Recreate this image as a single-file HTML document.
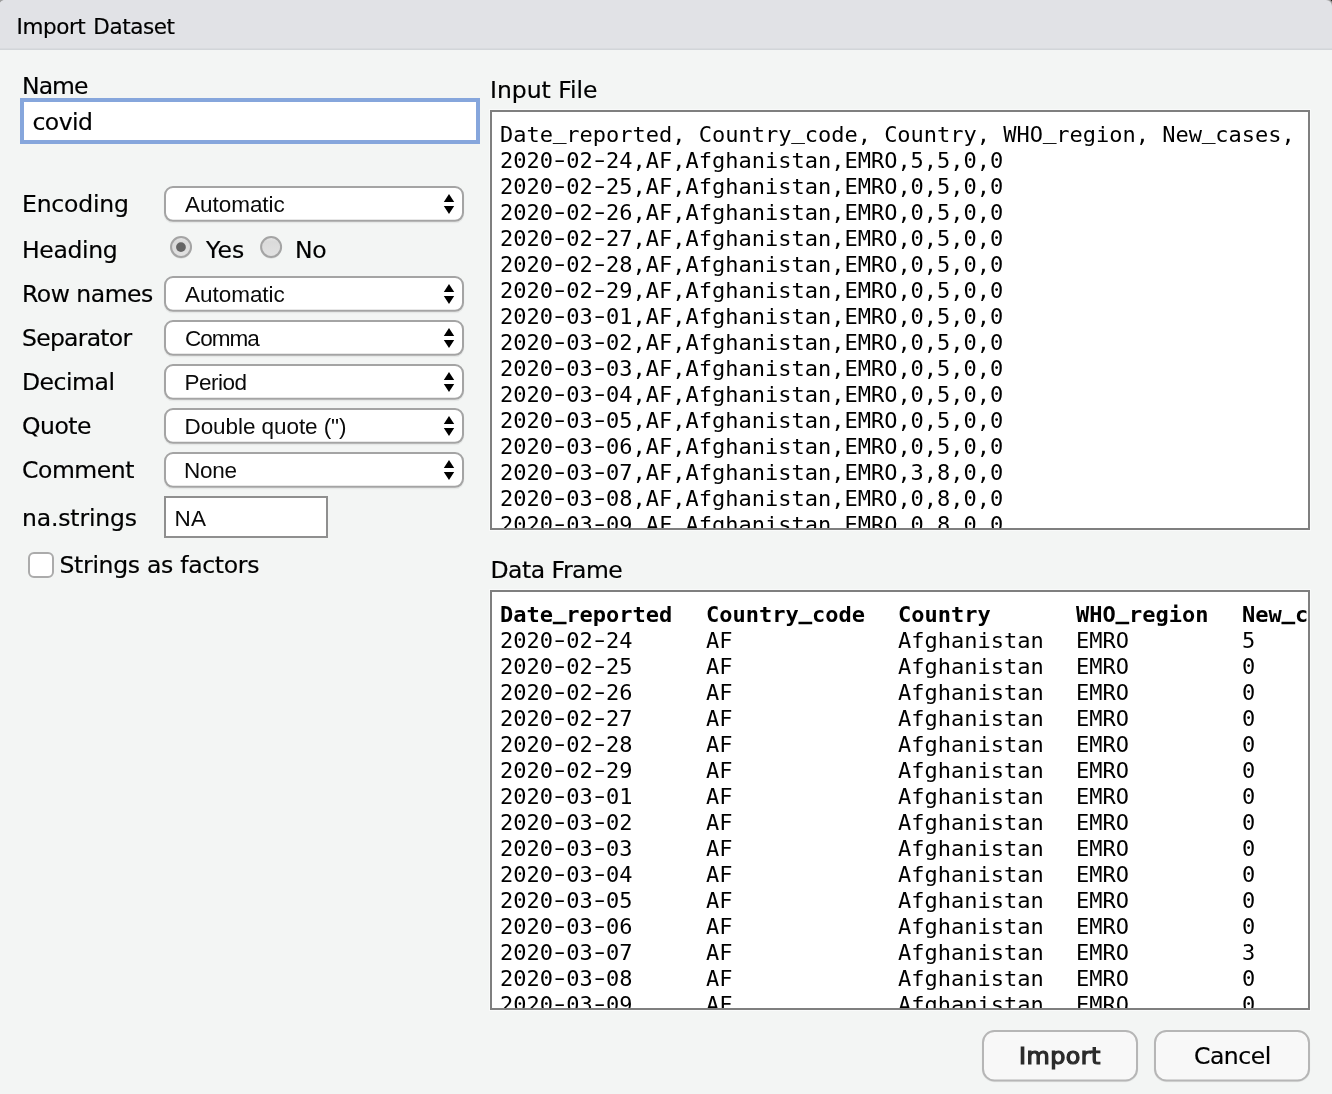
<!DOCTYPE html>
<html><head><meta charset="utf-8"><title>Import Dataset</title><style>
html,body{margin:0;padding:0;}
body{width:1332px;height:1094px;overflow:hidden;background:#f3f5f4;position:relative;font-family:"DejaVu Sans","Liberation Sans",sans-serif;color:#000;}
#bg{position:absolute;left:0;top:0;}
#fg{position:absolute;left:0;top:0;width:1332px;height:1094px;will-change:transform;}
.t,.h{position:absolute;white-space:nowrap;line-height:30px;font-size:23.5px;-webkit-text-stroke:0.2px #000;}
.ttl{font-size:21.5px;word-spacing:1.6px;}
.b{color:#2b2b2b;font-size:22.3px;-webkit-text-stroke:1.2px #2b2b2b;transform:scaleX(1.07);transform-origin:0 50%;}
.h{font-family:"Liberation Sans",sans-serif;font-size:22.5px;color:#0a0a0a;-webkit-text-stroke:0;}
.box{position:absolute;left:490px;width:816px;height:416px;border:2px solid #7f7f7f;background:#fff;overflow:hidden;box-shadow:0 0 0 1px #f9fafa;}
.box pre, .box table{margin:0;font-family:"DejaVu Sans Mono","Liberation Mono",monospace;font-size:22px;line-height:26px;}
.box pre{position:absolute;left:8px;top:10px;}
.box table{position:absolute;left:8px;top:10px;border-collapse:collapse;table-layout:fixed;width:882px;}
.box td,.box th{padding:0;text-align:left;white-space:nowrap;font-weight:normal;}
.box th{font-weight:bold;}
.hy{display:inline-block;transform:translateY(-1px) scaleX(1.5);}
.u{position:relative;top:-3.5px;-webkit-text-stroke:0.4px #000;}
</style></head><body>
<svg id="bg" width="1332" height="1094" viewBox="0 0 1332 1094">
<defs><linearGradient id="rg" x1="0" y1="0" x2="0" y2="1"><stop offset="0" stop-color="#e6e6e6"/><stop offset="0.25" stop-color="#dadada"/><stop offset="1" stop-color="#e2e2e2"/></linearGradient></defs>
<rect x="0" y="0" width="1332" height="48" fill="#e1e2e6"/><rect x="0" y="48" width="1332" height="1" fill="#d9dbdf"/><rect x="0" y="49" width="1332" height="1" fill="#d2d5d9"/>
<path d="M0 0 H3.6 Q1.1 0.7 0 2.4 Z" fill="#9c9c9c"/><path d="M1326 0 H1332 V6 A6 6 0 0 0 1326 0 Z" fill="#a0a0a0"/><path d="M1330.3 0 H1332 V1.7 A7.5 7.5 0 0 0 1330.3 0 Z" fill="#20211c"/>
<rect x="22" y="100" width="456" height="42" fill="#fff" stroke="#86a6dc" stroke-width="4"/>
<rect x="164.5" y="187.6" width="299" height="35" rx="8.5" fill="none" stroke="#000" stroke-opacity="0.05" stroke-width="1.5"/>
<rect x="165" y="187" width="298" height="33.8" rx="8" fill="#fff" stroke="#a4a4a4" stroke-width="2"/>
<path d="M449 194 L454.2 202 L443.8 202 Z M449 214 L454.2 206 L443.8 206 Z" fill="#000"/>
<rect x="164.5" y="277.6" width="299" height="35" rx="8.5" fill="none" stroke="#000" stroke-opacity="0.05" stroke-width="1.5"/>
<rect x="165" y="277" width="298" height="33.8" rx="8" fill="#fff" stroke="#a4a4a4" stroke-width="2"/>
<path d="M449 284 L454.2 292 L443.8 292 Z M449 304 L454.2 296 L443.8 296 Z" fill="#000"/>
<rect x="164.5" y="321.6" width="299" height="35" rx="8.5" fill="none" stroke="#000" stroke-opacity="0.05" stroke-width="1.5"/>
<rect x="165" y="321" width="298" height="33.8" rx="8" fill="#fff" stroke="#a4a4a4" stroke-width="2"/>
<path d="M449 328 L454.2 336 L443.8 336 Z M449 348 L454.2 340 L443.8 340 Z" fill="#000"/>
<rect x="164.5" y="365.6" width="299" height="35" rx="8.5" fill="none" stroke="#000" stroke-opacity="0.05" stroke-width="1.5"/>
<rect x="165" y="365" width="298" height="33.8" rx="8" fill="#fff" stroke="#a4a4a4" stroke-width="2"/>
<path d="M449 372 L454.2 380 L443.8 380 Z M449 392 L454.2 384 L443.8 384 Z" fill="#000"/>
<rect x="164.5" y="409.6" width="299" height="35" rx="8.5" fill="none" stroke="#000" stroke-opacity="0.05" stroke-width="1.5"/>
<rect x="165" y="409" width="298" height="33.8" rx="8" fill="#fff" stroke="#a4a4a4" stroke-width="2"/>
<path d="M449 416 L454.2 424 L443.8 424 Z M449 436 L454.2 428 L443.8 428 Z" fill="#000"/>
<rect x="164.5" y="453.6" width="299" height="35" rx="8.5" fill="none" stroke="#000" stroke-opacity="0.05" stroke-width="1.5"/>
<rect x="165" y="453" width="298" height="33.8" rx="8" fill="#fff" stroke="#a4a4a4" stroke-width="2"/>
<path d="M449 460 L454.2 468 L443.8 468 Z M449 480 L454.2 472 L443.8 472 Z" fill="#000"/>
<ellipse cx="181.05" cy="248.3" rx="10.6" ry="10.6" fill="#000" fill-opacity="0.07"/>
<circle cx="181.05" cy="247" r="10" fill="url(#rg)" stroke="#a4a4a4" stroke-width="2"/>
<ellipse cx="271.1" cy="248.3" rx="10.6" ry="10.6" fill="#000" fill-opacity="0.07"/>
<circle cx="271.1" cy="247" r="10" fill="url(#rg)" stroke="#a4a4a4" stroke-width="2"/>
<circle cx="180.95" cy="247.1" r="4.9" fill="#646464"/>
<rect x="165" y="497" width="162" height="40" fill="#fff" stroke="#8f8f8f" stroke-width="2"/>
<rect x="29" y="553" width="24" height="24" rx="5" fill="#fff" stroke="#ababab" stroke-width="2"/>
<rect x="982.5" y="1031.6" width="155" height="50" rx="12" fill="none" stroke="#000" stroke-opacity="0.05" stroke-width="1.5"/>
<rect x="983" y="1031" width="154" height="49.5" rx="11.5" fill="#f8f8f8" stroke="#b6b6b6" stroke-width="2"/>
<rect x="1154.5" y="1031.6" width="155" height="50" rx="12" fill="none" stroke="#000" stroke-opacity="0.05" stroke-width="1.5"/>
<rect x="1155" y="1031" width="154" height="49.5" rx="11.5" fill="#f8f8f8" stroke="#b6b6b6" stroke-width="2"/>
</svg>
<div id="fg">
<div id="ttl" class="t ttl" style="left:16.50px;top:12.00px;letter-spacing:-0.420px">Import Dataset</div>
<div id="name" class="t" style="left:22.00px;top:71.00px;letter-spacing:-0.950px">Name</div>
<div id="covid" class="t" style="left:32.50px;top:107.00px;letter-spacing:-0.570px">covid</div>
<div id="enc" class="t" style="left:22.00px;top:189.00px;letter-spacing:-0.210px">Encoding</div>
<div id="head" class="t" style="left:22.00px;top:235.00px;letter-spacing:-0.340px">Heading</div>
<div id="rown" class="t" style="left:22.00px;top:279.00px;letter-spacing:-0.500px">Row names</div>
<div id="sep" class="t" style="left:22.00px;top:323.00px;letter-spacing:-0.740px">Separator</div>
<div id="dec" class="t" style="left:22.00px;top:367.00px;letter-spacing:-0.480px">Decimal</div>
<div id="quo" class="t" style="left:22.00px;top:411.00px;letter-spacing:-0.500px">Quote</div>
<div id="com" class="t" style="left:22.00px;top:455.00px;letter-spacing:-0.450px">Comment</div>
<div id="nas" class="t" style="left:22.00px;top:503.00px;letter-spacing:-0.160px">na.strings</div>
<div id="saf" class="t" style="left:59.50px;top:550.00px;letter-spacing:-0.300px">Strings as factors</div>
<div id="yes" class="t" style="left:206.00px;top:235.00px;letter-spacing:0.180px">Yes</div>
<div id="no" class="t" style="left:295.00px;top:235.00px;letter-spacing:-0.360px">No</div>
<div id="inf" class="t" style="left:490.00px;top:75.00px;letter-spacing:-0.020px">Input File</div>
<div id="daf" class="t" style="left:490.50px;top:555.00px;letter-spacing:-0.500px">Data Frame</div>
<div id="imp" class="t b" style="left:1019.00px;top:1041.00px;letter-spacing:0.400px">Import</div>
<div id="can" class="t" style="left:1194.00px;top:1041.00px;letter-spacing:-0.470px">Cancel</div>
<div id="s1" class="h" style="left:185.00px;top:190.00px;letter-spacing:-0.030px">Automatic</div>
<div id="s2" class="h" style="left:185.00px;top:280.00px;letter-spacing:-0.030px">Automatic</div>
<div id="s3" class="h" style="left:185.00px;top:324.00px;letter-spacing:-1.020px">Comma</div>
<div id="s4" class="h" style="left:184.50px;top:368.00px;letter-spacing:-0.500px">Period</div>
<div id="s5" class="h" style="left:184.50px;top:412.00px;letter-spacing:-0.070px">Double quote (&quot;)</div>
<div id="s6" class="h" style="left:184.00px;top:456.00px;letter-spacing:-0.250px">None</div>
<div id="na" class="h" style="left:174.50px;top:504.00px;letter-spacing:0.220px">NA</div>
<div class="box" style="top:110px"><pre>Date<span class="u">_</span>reported, Country<span class="u">_</span>code, Country, WHO<span class="u">_</span>region, New<span class="u">_</span>cases,
2020<span class="hy">-</span>02<span class="hy">-</span>24,AF,Afghanistan,EMRO,5,5,0,0
2020<span class="hy">-</span>02<span class="hy">-</span>25,AF,Afghanistan,EMRO,0,5,0,0
2020<span class="hy">-</span>02<span class="hy">-</span>26,AF,Afghanistan,EMRO,0,5,0,0
2020<span class="hy">-</span>02<span class="hy">-</span>27,AF,Afghanistan,EMRO,0,5,0,0
2020<span class="hy">-</span>02<span class="hy">-</span>28,AF,Afghanistan,EMRO,0,5,0,0
2020<span class="hy">-</span>02<span class="hy">-</span>29,AF,Afghanistan,EMRO,0,5,0,0
2020<span class="hy">-</span>03<span class="hy">-</span>01,AF,Afghanistan,EMRO,0,5,0,0
2020<span class="hy">-</span>03<span class="hy">-</span>02,AF,Afghanistan,EMRO,0,5,0,0
2020<span class="hy">-</span>03<span class="hy">-</span>03,AF,Afghanistan,EMRO,0,5,0,0
2020<span class="hy">-</span>03<span class="hy">-</span>04,AF,Afghanistan,EMRO,0,5,0,0
2020<span class="hy">-</span>03<span class="hy">-</span>05,AF,Afghanistan,EMRO,0,5,0,0
2020<span class="hy">-</span>03<span class="hy">-</span>06,AF,Afghanistan,EMRO,0,5,0,0
2020<span class="hy">-</span>03<span class="hy">-</span>07,AF,Afghanistan,EMRO,3,8,0,0
2020<span class="hy">-</span>03<span class="hy">-</span>08,AF,Afghanistan,EMRO,0,8,0,0
2020<span class="hy">-</span>03<span class="hy">-</span>09,AF,Afghanistan,EMRO,0,8,0,0</pre></div>
<div class="box" style="top:590px"><table><colgroup><col style="width:206px"><col style="width:192px"><col style="width:178px"><col style="width:166px"><col style="width:140px"></colgroup><tr><th>Date<span class="u">_</span>reported</th><th>Country<span class="u">_</span>code</th><th>Country</th><th>WHO<span class="u">_</span>region</th><th>New<span class="u">_</span>cases</th></tr>
<tr><td>2020<span class="hy">-</span>02<span class="hy">-</span>24</td><td>AF</td><td>Afghanistan</td><td>EMRO</td><td>5</td></tr>
<tr><td>2020<span class="hy">-</span>02<span class="hy">-</span>25</td><td>AF</td><td>Afghanistan</td><td>EMRO</td><td>0</td></tr>
<tr><td>2020<span class="hy">-</span>02<span class="hy">-</span>26</td><td>AF</td><td>Afghanistan</td><td>EMRO</td><td>0</td></tr>
<tr><td>2020<span class="hy">-</span>02<span class="hy">-</span>27</td><td>AF</td><td>Afghanistan</td><td>EMRO</td><td>0</td></tr>
<tr><td>2020<span class="hy">-</span>02<span class="hy">-</span>28</td><td>AF</td><td>Afghanistan</td><td>EMRO</td><td>0</td></tr>
<tr><td>2020<span class="hy">-</span>02<span class="hy">-</span>29</td><td>AF</td><td>Afghanistan</td><td>EMRO</td><td>0</td></tr>
<tr><td>2020<span class="hy">-</span>03<span class="hy">-</span>01</td><td>AF</td><td>Afghanistan</td><td>EMRO</td><td>0</td></tr>
<tr><td>2020<span class="hy">-</span>03<span class="hy">-</span>02</td><td>AF</td><td>Afghanistan</td><td>EMRO</td><td>0</td></tr>
<tr><td>2020<span class="hy">-</span>03<span class="hy">-</span>03</td><td>AF</td><td>Afghanistan</td><td>EMRO</td><td>0</td></tr>
<tr><td>2020<span class="hy">-</span>03<span class="hy">-</span>04</td><td>AF</td><td>Afghanistan</td><td>EMRO</td><td>0</td></tr>
<tr><td>2020<span class="hy">-</span>03<span class="hy">-</span>05</td><td>AF</td><td>Afghanistan</td><td>EMRO</td><td>0</td></tr>
<tr><td>2020<span class="hy">-</span>03<span class="hy">-</span>06</td><td>AF</td><td>Afghanistan</td><td>EMRO</td><td>0</td></tr>
<tr><td>2020<span class="hy">-</span>03<span class="hy">-</span>07</td><td>AF</td><td>Afghanistan</td><td>EMRO</td><td>3</td></tr>
<tr><td>2020<span class="hy">-</span>03<span class="hy">-</span>08</td><td>AF</td><td>Afghanistan</td><td>EMRO</td><td>0</td></tr>
<tr><td>2020<span class="hy">-</span>03<span class="hy">-</span>09</td><td>AF</td><td>Afghanistan</td><td>EMRO</td><td>0</td></tr>
</table></div>
</div>
</body></html>
